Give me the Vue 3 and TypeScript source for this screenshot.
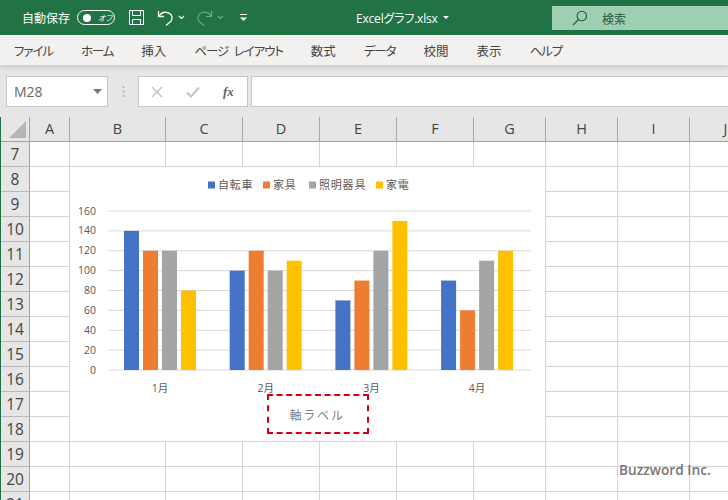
<script setup lang="ts">
interface Series { name: string; color: string; values: number[] }
interface MenuItem { label: string; kana: boolean }

const menus: MenuItem[] = [
  { label: 'ファイル', kana: true }, { label: 'ホーム', kana: true }, { label: '挿入', kana: false },
  { label: 'ページ レイアウト', kana: true }, { label: '数式', kana: false }, { label: 'データ', kana: true },
  { label: '校閲', kana: false }, { label: '表示', kana: false }, { label: 'ヘルプ', kana: true },
]
const columns: { label: string; width: number }[] = [
  { label: 'A', width: 40 }, { label: 'B', width: 96 }, { label: 'C', width: 77 }, { label: 'D', width: 77 },
  { label: 'E', width: 77 }, { label: 'F', width: 77 }, { label: 'G', width: 72 }, { label: 'H', width: 72 },
  { label: 'I', width: 72 }, { label: 'J', width: 72 },
]
const rows: number[] = Array.from({ length: 15 }, (_, i) => i + 7)
const gridTemplate = `29px ${columns.map((c) => c.width + 'px').join(' ')}`

const series: Series[] = [
  { name: '自転車', color: '#4472c4', values: [140, 100, 70, 90] },
  { name: '家具', color: '#ed7d31', values: [120, 120, 90, 60] },
  { name: '照明器具', color: '#a5a5a5', values: [120, 100, 120, 110] },
  { name: '家電', color: '#ffc000', values: [80, 110, 150, 120] },
]
const months: string[] = ['1月', '2月', '3月', '4月']
const ticks: number[] = [0, 20, 40, 60, 80, 100, 120, 140, 160]
const ox = 70
const oy = 166
const baseY = 370 - oy
const scale = 159 / 160
const groupX = (g: number): number => 124 - ox + g * 105.7
const tickY = (t: number): number => baseY - t * scale
const legendX: number[] = [138, 193, 239, 306]
</script>

<template>
  <div class="app">
    <header class="titlebar">
      <span class="autosave">自動保存</span>
      <span class="toggle"><i class="knob"></i><em>オフ</em></span>
      <svg class="qat save" width="17" height="17" viewBox="0 0 17 17" fill="none" stroke="#fff" stroke-width="1">
        <path d="M1.5 1.5h14v14h-14z" />
        <path d="M4.5 1.5v5h8v-5M4.5 15.5v-5h8v5" />
      </svg>
      <svg class="qat undo" width="18" height="18" viewBox="0 0 18 18" fill="none" stroke="#fff" stroke-width="1.3">
        <path d="M1.5 2v5.5H7" />
        <path d="M1.8 7.2C4 3.8 8 2.6 11.5 3.8c4 1.5 4.6 6 2.2 8.8L9 16.5" />
      </svg>
      <svg class="chev c1" width="7" height="5" viewBox="0 0 7 5" fill="none" stroke="#fff" stroke-width="1.1"><path d="M1 1l2.5 2.5L6 1" /></svg>
      <svg class="qat redo" width="18" height="18" viewBox="0 0 18 18" fill="none" stroke="#6ea88a" stroke-width="1.2">
        <path d="M16.5 2v5.5H11" />
        <path d="M16.2 7.2C14 3.8 10 2.6 6.5 3.8c-4 1.5-4.6 6-2.2 8.8L9 16.5" />
      </svg>
      <svg class="chev c2" width="7" height="5" viewBox="0 0 7 5" fill="none" stroke="#6ea88a" stroke-width="1.1"><path d="M1 1l2.5 2.5L6 1" /></svg>
      <svg class="custom" width="9" height="8" viewBox="0 0 9 8"><path d="M1 0.5h7" stroke="#fff" stroke-width="1" /><path d="M1 3.5h7L4.5 7z" fill="#fff" /></svg>
      <span class="doc">Excelグラフ.xlsx</span>
      <svg class="docchev" width="6" height="3" viewBox="0 0 6 3"><path d="M0 0h6L3 3z" fill="#fff" /></svg>
      <div class="search">
        <svg width="16" height="16" viewBox="0 0 16 16" fill="none" stroke="#1e5c3c" stroke-width="1.1">
          <circle cx="9.800" cy="6" r="4.700" />
          <path d="M6.500 9.500L1 15" />
        </svg>
        <span>検索</span>
      </div>
    </header>

    <nav class="menubar">
      <span v-for="m in menus" :key="m.label" :class="{ kana: m.kana }">{{ m.label }}</span>
    </nav>

    <section class="formula">
      <div class="namebox"><span>M28</span><svg width="9" height="5" viewBox="0 0 9 5"><path d="M0 0h9L4.500 5z" fill="#777" /></svg></div>
      <svg class="dots" width="3" height="11" viewBox="0 0 3 11" fill="#b5b5b5"><rect x="0.500" y="0" width="2" height="2" /><rect x="0.500" y="4.500" width="2" height="2" /><rect x="0.500" y="9" width="2" height="2" /></svg>
      <div class="fbuttons">
        <svg width="12" height="12" viewBox="0 0 12 12" fill="none" stroke="#c4c4c4" stroke-width="1.500"><path d="M1 1l10 10M11 1L1 11" /></svg>
        <svg width="14" height="12" viewBox="0 0 14 12" fill="none" stroke="#c4c4c4" stroke-width="2"><path d="M1 6.500l4 4L13 1.500" /></svg>
        <span class="fx">fx</span>
      </div>
      <div class="finput"></div>
    </section>

    <main class="sheet">
      <div class="grid" :style="{ gridTemplateColumns: gridTemplate }">
        <div class="corner"><i></i></div>
        <div v-for="c in columns" :key="c.label" class="colhead">{{ c.label }}</div>
        <template v-for="r in rows" :key="r">
          <div class="rowhead">{{ r }}</div>
          <div v-for="c in columns" :key="c.label" class="cell"></div>
        </template>
      </div>

      <svg class="chart" width="476" height="275" viewBox="0 0 476 275">
        <rect y="1" width="475" height="274" fill="#fff" />
        <g v-for="(s, i) in series" :key="s.name">
          <rect :x="legendX[i]" y="15.500" width="7" height="7" :fill="s.color" />
          <text :x="legendX[i] + 10" y="23" class="legend">{{ s.name }}</text>
        </g>
        <g v-for="t in ticks" :key="t">
          <line x1="38" x2="461" :y1="tickY(t)" :y2="tickY(t)" stroke="#d9d9d9" stroke-width="1" />
          <text x="26" :y="tickY(t) + 3.500" text-anchor="end" class="axis">{{ t }}</text>
        </g>
        <g v-for="(s, i) in series" :key="s.name + 'bars'">
          <rect
            v-for="(v, g) in s.values"
            :key="g"
            :x="groupX(g) + i * 19"
            :y="tickY(v)"
            width="15"
            :height="v * scale"
            :fill="s.color"
          />
        </g>
        <text v-for="(m, g) in months" :key="m" :x="groupX(g) + 36" y="226" text-anchor="middle" class="axis">{{ m }}</text>
      </svg>

      <div class="axislabel">軸ラベル</div>
      <div class="watermark">Buzzword Inc.</div>
    </main>
  </div>
</template>

<style>
html, body { margin: 0; padding: 0; }
</style>

<style scoped>
.app {
  width: 728px;
  height: 500px;
  overflow: hidden;
  display: flex;
  flex-direction: column;
  background: #fff;
  font-family: "Noto Sans CJK JP", "Open Sans", sans-serif;
  font-feature-settings: "palt";
}
.titlebar {
  height: 35px;
  flex: none;
  background: #217346;
  color: #fff;
  position: relative;
  display: flex;
  align-items: center;
  font-size: 12px;
}
.autosave { margin-left: 22px; width: 55px; font-size: 12px; }
.toggle {
  width: 38px;
  height: 15px;
  box-sizing: border-box;
  border: 1px solid #fff;
  border-radius: 8px;
  display: flex;
  align-items: center;
  position: relative;
}
.knob { width: 8px; height: 8px; border-radius: 50%; background: #fff; margin-left: 5px; }
.toggle em { font-size: 8px; font-style: italic; margin-left: 7px; line-height: 1; }
.save { margin-left: 13px; }
.undo { margin-left: 12px; }
.c1 { margin-left: 3px; }
.redo { margin-left: 10px; }
.c2 { margin-left: 4px; }
.custom { margin-left: 15px; }
.doc { margin-left: 108px; font-family: "Open Sans", "Noto Sans CJK JP", sans-serif; font-size: 12px; letter-spacing: -0.2px; }
.docchev { margin-left: 5px; }
.search {
  margin-left: auto;
  width: 176px;
  height: 24px;
  align-self: flex-start;
  margin-top: 6px;
  background: #9fcfb3;
  display: flex;
  align-items: center;
  color: #1e5c3c;
  font-size: 12px;
  box-sizing: border-box;
  padding-left: 20px;
  gap: 14px;
}
.menubar {
  height: 30px;
  flex: none;
  background: #f3f0f0;
  display: flex;
  align-items: center;
  gap: 28px;
  padding-left: 14px;
  font-size: 12.500px;
  color: #444;
  box-shadow: 0 2px 5px rgba(0, 0, 0, 0.14);
  position: relative;
  z-index: 1;
}
.kana { letter-spacing: -1.100px; word-spacing: 4px; }
.formula {
  height: 52px;
  flex: none;
  background: #e6e6e6;
  display: flex;
  align-items: flex-start;
  padding: 11px 0 0 6px;
  box-sizing: border-box;
}
.namebox {
  width: 102px;
  height: 31px;
  box-sizing: border-box;
  background: #fff;
  border: 1px solid #c6c6c6;
  display: flex;
  align-items: center;
  justify-content: space-between;
  padding: 0 5px 0 7px;
  font-family: "Open Sans", sans-serif;
  font-size: 14px;
  color: #666;
}
.dots { margin: 10px 13px 0 14px; }
.fbuttons {
  width: 110px;
  height: 31px;
  box-sizing: border-box;
  background: #fff;
  border: 1px solid #c6c6c6;
  display: flex;
  align-items: center;
  gap: 23px;
  padding-left: 12px;
}
.fx { font-family: "Liberation Serif", serif; font-style: italic; font-weight: 700; font-size: 13px; color: #666; }
.finput {
  flex: 1;
  margin-left: 3px;
  height: 31px;
  box-sizing: border-box;
  background: #fff;
  border: 1px solid #c6c6c6;
  border-right: 0;
}
.sheet {
  flex: 1;
  position: relative;
  border-left: 1px solid #217346;
  overflow: hidden;
}
.grid {
  display: grid;
  grid-auto-rows: 25px;
  grid-template-rows: 25px;
}
.corner {
  background: #e6e6e6;
  border-bottom: 1px solid #a0a0a0;
  border-right: 1px solid #a0a0a0;
  box-sizing: border-box;
  position: relative;
}
.corner i {
  position: absolute;
  left: 8px;
  top: 4px;
  width: 17px;
  height: 17px;
  background: #b5b5b5;
  clip-path: polygon(100% 0, 100% 100%, 0 100%);
}
.colhead {
  background: #e6e6e6;
  border-right: 1px solid #a8a8a8;
  border-bottom: 1px solid #a0a0a0;
  box-sizing: border-box;
  padding-bottom: 1px;
  display: flex;
  align-items: center;
  justify-content: center;
  font-size: 14.500px;
  color: #444;
  font-family: "Open Sans", sans-serif;
}
.rowhead {
  background: #e6e6e6;
  border-right: 1px solid #a0a0a0;
  border-bottom: 1px solid #b8b8b8;
  box-sizing: border-box;
  padding-bottom: 1px;
  display: flex;
  align-items: center;
  justify-content: center;
  font-size: 15.500px;
  color: #444;
  font-family: "Open Sans", sans-serif;
}
.cell {
  border-right: 1px solid #d4d4d4;
  border-bottom: 1px solid #d4d4d4;
  box-sizing: border-box;
}
.chart {
  position: absolute;
  left: 69px;
  top: 49px;
  display: block;
}
.legend { font-size: 11px; fill: #595959; letter-spacing: 0.8px; }
.axis { font-size: 10.500px; fill: #595959; font-family: "Open Sans", "Noto Sans CJK JP", sans-serif; }
.axislabel {
  position: absolute;
  left: 265.500px;
  top: 277px;
  width: 102px;
  height: 40px;
  box-sizing: border-box;
  border: 2.500px dashed #d40010;
  display: flex;
  align-items: center;
  justify-content: center;
  font-size: 12px;
  letter-spacing: 2.500px;
  color: #7f7f7f;
}
.watermark {
  position: absolute;
  left: 618px;
  top: 343px;
  font-family: "Open Sans", sans-serif;
  font-weight: 600;
  font-size: 13.700px;
  color: #777;
  white-space: nowrap;
}
</style>
